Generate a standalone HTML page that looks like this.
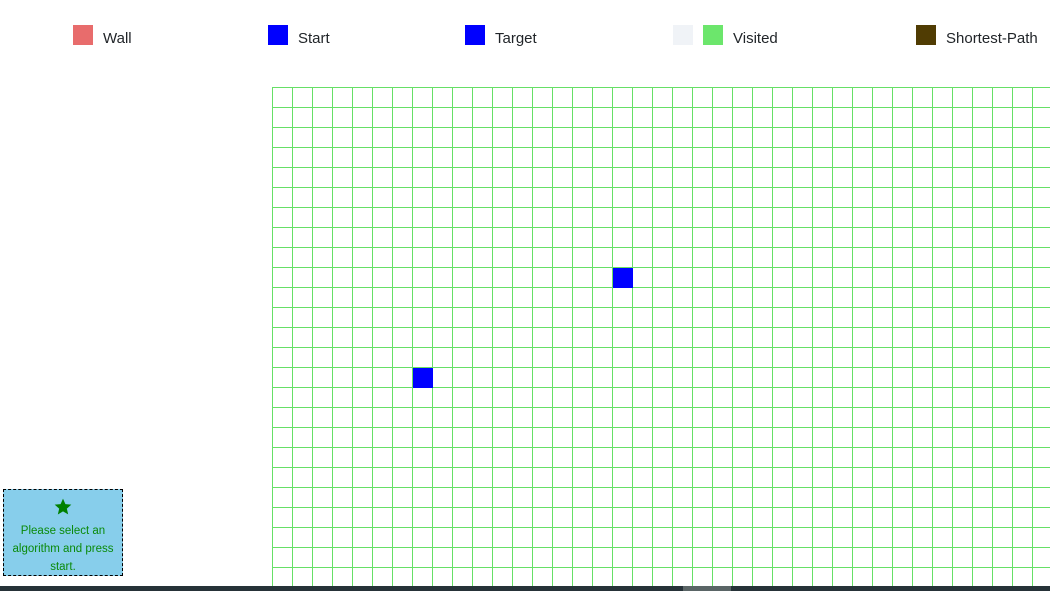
<!DOCTYPE html>
<html><head><meta charset="utf-8"><style>
body{margin:0;width:1050px;height:591px;overflow:hidden;background:#fff;position:relative;font-family:"Liberation Sans",sans-serif}
.sq{position:absolute;top:25px;width:20px;height:20px}
.lb{position:absolute;top:30px;font-size:15px;color:#212529;line-height:18px}
#info{position:absolute;left:3px;top:489px;width:118px;height:85px;background:#87ceeb;border:1px dashed #000;text-align:center;color:#0a8a0a;font-size:11.5px;line-height:18px}
#bar{position:absolute;left:0;top:586px;width:1050px;height:5px;background:#263238}
</style></head><body>
<div class="sq" style="left:73px;background:#e86c6c"></div><div class="lb" style="left:103px">Wall</div>
<div class="sq" style="left:268px;background:#0000ff"></div><div class="lb" style="left:298px">Start</div>
<div class="sq" style="left:465px;background:#0000ff"></div><div class="lb" style="left:495px">Target</div>
<div class="sq" style="left:673px;background:#f0f3f7"></div><div class="sq" style="left:703px;background:#6ce66c"></div><div class="lb" style="left:733px">Visited</div>
<div class="sq" style="left:916px;background:#503c03"></div><div class="lb" style="left:946px">Shortest-Path</div>
<svg style="position:absolute;left:0;top:0" width="1050" height="591">
<g stroke="#66e066" stroke-width="1" id="g"></g>
<rect x="613" y="268" width="20" height="20" fill="#0000ff"/>
<rect x="413" y="368" width="20" height="20" fill="#0000ff"/>
</svg>
<script>
var g=document.getElementById('g'),s='';
for(var x=272;x<1050;x+=20)s+='<line x1="'+(x+.5)+'" y1="87" x2="'+(x+.5)+'" y2="586"/>';
for(var y=87;y<586;y+=20)s+='<line x1="272" y1="'+(y+.5)+'" x2="1050" y2="'+(y+.5)+'"/>';
g.innerHTML=s;
</script>
<div id="info"><svg width="20" height="20" viewBox="0 0 24 24" style="margin-top:7px;display:block;margin-left:auto;margin-right:auto"><path d="M12 2l2.9 6.6 7.1.6-5.4 4.7 1.6 7L12 17.3 5.8 21l1.6-7L2 9.2l7.1-.6z" fill="#008000"/></svg><div style="margin-top:5px">Please select an algorithm and press start.</div></div>
<div id="bar"></div><div style="position:absolute;left:683px;top:586px;width:48px;height:5px;background:#5a6566"></div>
</body></html>
